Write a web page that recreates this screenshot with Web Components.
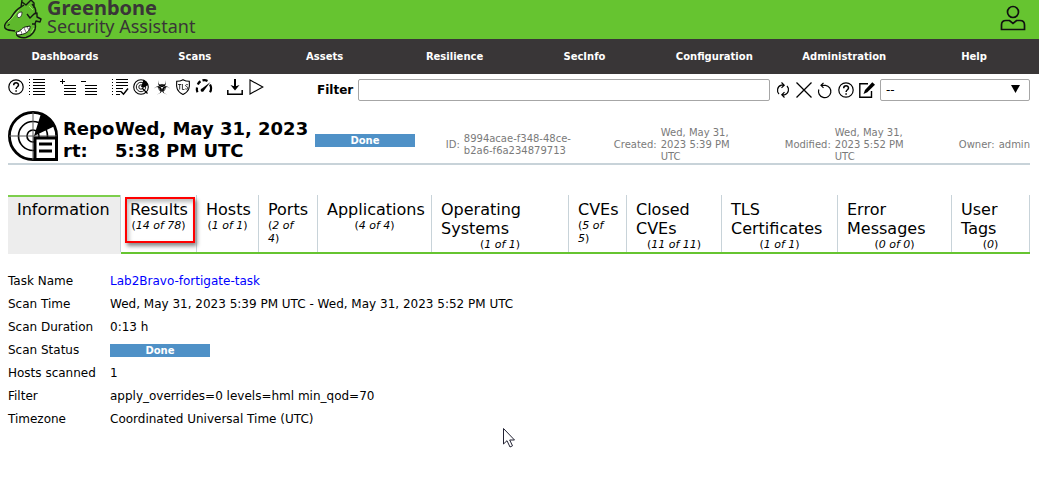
<!DOCTYPE html>
<html lang="en">
<head>
<meta charset="utf-8">
<meta name="viewport" content="width=device-width, initial-scale=1">
<title>Greenbone Security Assistant</title>
<style>
html { background: #fff; }
body { margin: 0; font-family: Verdana, "DejaVu Sans", sans-serif; font-size: 12px; color: #000; }
</style>
</head>
<body>
<gsa-app></gsa-app>
<script>
const define = (name, html, setup) => {
  const template = document.createElement('template');
  template.innerHTML = html;
  customElements.define(name, class extends HTMLElement {
    constructor() {
      super();
      this.attachShadow({ mode: 'open' }).append(template.content.cloneNode(true));
    }
    connectedCallback() { if (setup) setup(this, this.shadowRoot); }
  });
};

const list = (x, y, step, n, end = 16) =>
  Array.from({ length: n }, (_, i) => `M${x} ${y + i * step + .5}H${end}`).join('');

const crescent = 'M5 .8C2.3 6 6.600 8.200 8 8.200S13.700 6 11 .8C12.500 4 11 6.200 8 6.200S3.500 4 5 .8z';

const icons = {
  help: '<circle cx="8" cy="8" r="7.2" stroke-width="1.2"/><path d="M5.700 6.300c0-3.300 4.800-3.200 4.800-.3 0 1.700-2.400 1.800-2.400 4M8.100 11.300v1.500" stroke-width="1.500"/>',
  list: `<path d="${list(4, 0, 3, 6)}${list(0, 0, 3, 6, 1)}" shape-rendering="crispEdges"/>`,
  add: `<path d="${list(4, 6, 3, 4)}M0 2.5H5M2.5 0V5" shape-rendering="crispEdges"/>`,
  remove: `<path d="${list(4, 6, 3, 4)}M0 2.5H5" shape-rendering="crispEdges"/>`,
  results: `<path d="M4 .5H16M4 3.5H16M4 6.5H16M4 9.5H11M4 12.5H9M4 15.5H8M0 .5H1M0 3.5H1M0 6.5H1M0 9.5H1M0 12.5H1M0 15.5H1" shape-rendering="crispEdges"/><path d="M9 12.5l2.500 2.700L16 9.500" stroke-width="1.500"/>`,
  vulnerability: '<circle cx="8" cy="8" r="7.300"/><circle cx="8" cy="8" r="4.700" stroke-width=".9"/><circle cx="8" cy="8" r="2.200" stroke-width=".9"/><path d="M8 8L10.500.8A8 8 0 0 1 15 6L11 8.500z" fill="#000" stroke="none"/><path d="M9 9L14.500 14.500" stroke-width="1.300"/>',
  biohazard: `<g fill="#000" stroke="none"><path d="${crescent}"/><path d="${crescent}" transform="rotate(120 8 8.700)"/><path d="${crescent}" transform="rotate(240 8 8.700)"/></g><circle cx="8" cy="8.700" r="3.400" stroke-width=".8"/><circle cx="8" cy="8.700" r=".8" fill="#fff" stroke="none"/>`,
  tls: '<path d="M8 .7c2 1.200 4 1.600 6.300 1.600C14.800 8 14.500 12.500 8 15.400 1.500 12.500 1.200 8 1.700 2.300 4 2.300 6 1.900 8 .7z"/><path d="M3 5.500H6.300M4.700 5.500V10.500M7.400 5V10.500H9.500M13 6c-1-1-2.800-.4-2.300.8s2.200.7 2.200 2.200-2.300 1.400-2.700.5" stroke-width=".8"/>',
  performance: '<path d="M1.500 13.200A7 7 0 0 1 1 8.500M1.800 5.500A7 7 0 0 1 4.500 2.300M6.500 1.400A7 7 0 0 1 11.500 1.900M14 5.500A7.500 7.500 0 0 1 14 13.200" stroke-width="2.200"/><path d="M14.500 3L8 11.500A1.700 1.700 0 1 1 6 9.500z" fill="#000" stroke="none"/>',
  download: '<path d="M.8 11V15.200H15.200V11" stroke-width="1.500"/><path d="M8 0V8" stroke-width="2"/><path d="M3.500 6L8 11.500 12.500 6 8 7.500z" fill="#000" stroke="none"/>',
  start: '<path d="M2 1V15L14.800 8z"/>',
  refresh: '<path d="M4 12C1.500 9.500 2 4.200 6.500 3.200H9M12 4C14.500 6.500 14 11.800 9.500 12.800H7M6.500 .5L9.200 3.200 6.500 5.900M9.500 10.100L6.800 12.800 9.500 15.500" stroke-width="1.200"/>',
  clear: '<path d="M.5 .5L15.500 15.500M15.500 .5L.5 15.500" stroke-width="1.300"/>',
  reset: '<path d="M4.200 3.300H8.500A6.200 6.200 0 1 1 1.800 7.500M6.500 .8L4 3.300 6.500 5.800" stroke-width="1.200"/>',
  edit: '<path d="M9 1.800H.8V15.200H12.500V9" stroke-width="1.400"/><path d="M13.300 .3L16 2.700 8.300 10.300 4.500 12 6 8z" fill="#000" stroke="none"/>'
};

define('gsa-icon', `
<style>
:host { display: block; flex: none; width: 16px; height: 16px; }
button { display: block; width: 100%; height: 100%; padding: 0; border: 0; background: none; cursor: pointer; }
svg { display: block; width: 16px; height: 16px; overflow: visible; fill: none; stroke: #000; stroke-width: 1.1; }
</style><button type="button"><svg viewBox="0 0 16 16" aria-hidden="true"></svg></button>`, (host, root) => {
  root.querySelector('svg').innerHTML = icons[host.getAttribute('name')];
  root.querySelector('button').setAttribute('aria-label', host.getAttribute('name'));
});

define('gsa-status', `
<style>
:host { display: block; flex: none; width: 100px; height: 13px; line-height: 13px; background: #4f91c7; color: #fff; font-size: 10px; font-weight: bold; text-align: center; }
</style><slot></slot>`);

define('gsa-header', `
<style>
:host { display: flex; justify-content: space-between; align-items: center; height: 39px; padding: 0 13px 0 4px; background: #66c430; color: #393637; }
.brand { display: flex; align-self: flex-start; gap: 5px; text-decoration: none; color: inherit; }
.horse { display: block; width: 38px; height: 39px; }
.words { display: flex; flex-direction: column; font-family: "Noto Sans", sans-serif; font-size: 18px; line-height: 20px; }
strong { font-size: 20px; line-height: 16px; }
button { display: block; padding: 0; border: 0; background: none; margin-bottom: 4px; }
button svg { display: block; width: 26px; height: 26px; fill: none; stroke: #111; stroke-width: 1.7; }
</style>
<a class="brand" href="#">
<svg class="horse" viewBox="0 0 38 39" aria-hidden="true">
<path d="M17 8L18 0H28C32 4 32 9 33 14L37 18 34 22 31 30C30 35 25 38 19 38L12 33C8 30 1 31 .5 26 0 22 6 19 9 14z" fill="#5eb82c"/>
<g fill="none" stroke="#141a12" stroke-width="1.400" stroke-linejoin="round">
<path d="M18 0L17 7C11 10 9 15 6 19 2 22-.5 25 1 28 3 31 8 30 11 31M18 2L22 5 27 0 30 3V8M28 4C33 9 32 12 31 14M17 7L20 5M23 14L26 18 30 14 33 13 33 17 37 19 36 22 32 21 31 24 28 24M31 24C33 30 28 36 22 37.500 17 38.500 11 36 13 33"/>
<path d="M4 26C4 24 5 24 6 25" stroke-width="1"/>
</g>
<path d="M18 12C14 12 12 15 14 17.500 17 18 18 15 18 12z" fill="#fff" stroke="#222" stroke-width=".8"/>
<path d="M12 32C17 32 17 28 21 27L26 26C27 31 21 35 13 35z" fill="#fff" stroke="#141a12"/>
<path d="M17 31L18 34M20 28L22 32M23 27L25 30" stroke="#555" stroke-width=".8"/>
<path d="M15 10C11 14 9 18 4 22M25 6L29 10M27 33L30 28" fill="none" stroke="#91e65a"/>
</svg>
<span class="words"><strong>Greenbone</strong><span>Security Assistant</span></span>
</a>
<button type="button" aria-label="User"><svg viewBox="0 0 26 26"><circle cx="13" cy="7" r="5.500"/><path d="M1.500 24.500V20C1.500 17 3.500 15.500 6 15.500H9.500L13 18.500 16.500 15.500H20C22.500 15.500 24.500 17 24.500 20V24.500z"/></svg></button>`);

define('gsa-menu', `
<style>
:host { display: flex; height: 35px; align-items: center; background: #393637; }
a { flex: 1; text-align: center; color: #fff; font-size: 10px; font-weight: bold; line-height: 14px; text-decoration: none; }
</style>
<a href="#">Dashboards</a><a href="#">Scans</a><a href="#">Assets</a><a href="#">Resilience</a><a href="#">SecInfo</a><a href="#">Configuration</a><a href="#">Administration</a><a href="#">Help</a>`);

define('gsa-toolbar', `
<style>
:host { display: flex; justify-content: space-between; align-items: flex-start; gap: 53px; }
.icons, .group, .filter { display: flex; }
.icons { gap: 15px; }
.group, .filter { gap: 5px; }
.filter { flex: 1; align-items: center; }
label { font-weight: bold; }
input, select { box-sizing: border-box; height: 22px; border: 1px solid #a6a6a6; border-radius: 2px; background: #fff; color: #000; font: inherit; }
input { flex: 1; min-width: 0; padding: 1px 8px; }
.select { position: relative; width: 150px; }
select { display: block; width: 100%; appearance: none; padding: 0 5px; }
.select svg { position: absolute; right: 10px; top: 6px; width: 9px; height: 8px; pointer-events: none; }
</style>
<div class="icons">
<div class="group"><gsa-icon name="help"></gsa-icon><gsa-icon name="list"></gsa-icon></div>
<div class="group"><gsa-icon name="add"></gsa-icon><gsa-icon name="remove"></gsa-icon></div>
<div class="group"><gsa-icon name="results"></gsa-icon><gsa-icon name="vulnerability"></gsa-icon><gsa-icon name="biohazard"></gsa-icon><gsa-icon name="tls"></gsa-icon><gsa-icon name="performance"></gsa-icon></div>
<div class="group"><gsa-icon name="download"></gsa-icon><gsa-icon name="start"></gsa-icon></div>
</div>
<div class="filter">
<label for="filter">Filter</label><input id="filter" type="text">
<gsa-icon name="refresh"></gsa-icon><gsa-icon name="clear"></gsa-icon><gsa-icon name="reset"></gsa-icon><gsa-icon name="help"></gsa-icon><gsa-icon name="edit"></gsa-icon>
<div class="select"><select aria-label="Saved filter"><option>--</option></select><svg viewBox="0 0 9 8"><path d="M0 0H9L4.500 8z"/></svg></div>
</div>`);

define('gsa-meta', `
<style>
:host { display: flex; align-items: center; gap: 4px; font-size: 10px; line-height: 12px; color: #7a7a7a; }
.value { max-width: var(--value-width, none); }
</style><slot name="label"></slot><span class="value"><slot></slot></span>`);

define('gsa-report-header', `
<style>
:host { display: flex; align-items: center; min-height: 52px; border-bottom: 2px solid #c8d3d9; }
.radar { display: block; flex: none; width: 50px; height: 50px; align-self: flex-start; margin-right: 5px; }
h1 { display: flex; align-self: flex-start; margin: 7px 0 0; font-size: 18px; line-height: 22px; }
.kind { width: 52px; word-break: break-all; }
.date { width: 200px; }
gsa-status { margin-top: 7px; }
.metas { flex: 1; display: flex; align-items: center; justify-content: flex-end; gap: 40px; margin-top: 15px; }
.id { --value-width: 110px; }
.when { --value-width: 84px; }
</style>
<svg class="radar" viewBox="0 0 50 50" aria-hidden="true"><g fill="none" stroke="#000"><circle cx="25" cy="25" r="23.600" stroke-width="2.800"/><circle cx="25" cy="25" r="14.500" stroke-width="1.700"/><circle cx="25" cy="25" r="6" stroke-width="1.700"/><path d="M1 25H49M25 1V49" stroke="#555" stroke-width="1"/></g><path d="M26 25L33 2.500C39 4 44 8 47 15z"/><path d="M27 27H48.500V48.500H27z" fill="#fff" stroke="#000" stroke-width="3"/><path d="M31 33H44M31 40H44" stroke="#000" stroke-width="2.800"/></svg>
<h1><span class="kind">Report:</span><span class="date">Wed, May 31, 2023 5:38 PM UTC</span></h1>
<gsa-status>Done</gsa-status>
<div class="metas">
<gsa-meta class="id"><span slot="label">ID:</span>8994acae-f348-48ce-b2a6-f6a234879713</gsa-meta>
<gsa-meta class="when"><span slot="label">Created:</span>Wed, May 31, 2023 5:39 PM UTC</gsa-meta>
<gsa-meta class="when"><span slot="label">Modified:</span>Wed, May 31, 2023 5:52 PM UTC</gsa-meta>
<gsa-meta><span slot="label">Owner:</span>admin</gsa-meta>
</div>`);

define('gsa-tab', `
<style>
:host { position: relative; display: flex; min-width: 0; box-sizing: border-box; border-bottom: 2px solid #66c430; }
:host([active]) { background: #ededed; border-bottom-color: #ededed; box-shadow: inset 0 2px #7dce4c; }
button { display: flex; flex-direction: column; align-items: flex-start; width: 100%; min-height: 57px; padding: 5px 0 0 9px; border: 0; border-right: 1px solid #c8d3d9; background: none; font: inherit; color: inherit; text-align: left; }
.title { font-size: 16px; line-height: 19px; }
.count { align-self: center; margin-right: 9px; font-size: 11px; line-height: 13px; }
:host([wrap]) .count { align-self: flex-start; width: 34px; margin: 0; }
.mark { display: none; position: absolute; top: 2px; left: 4px; right: 2px; height: 42px; border: 2px solid #f00; box-shadow: 2px 3px 4px #888, inset 2px 3px 4px #bbb; pointer-events: none; }
:host([marked]) .mark { display: block; }
</style>
<button type="button" role="tab"><span class="title"><slot></slot></span></button><span class="mark"></span>`, (host, root) => {
  const count = host.getAttribute('count');
  const button = root.querySelector('button');
  if (count) {
    const words = count.split(' ').map(word => `<i>${word}</i>`).join(' ');
    button.insertAdjacentHTML('beforeend', `<span class="count">(${words})</span>`);
  }
  host.style.flex = host.getAttribute('share') + ' 1 0';
  button.setAttribute('aria-selected', host.hasAttribute('active'));
});

define('gsa-tabs', `
<style>
:host { display: flex; margin-top: 30px; }
</style><slot></slot>`, host => host.setAttribute('role', 'tablist'));

define('gsa-details', `
<style>
:host { display: block; margin-top: 16px; }
table { border-collapse: collapse; }
th, td { height: 23px; padding: 0; font-size: 12px; font-weight: normal; line-height: 17px; text-align: left; vertical-align: middle; }
th { min-width: 88px; padding-right: 14px; }
a { color: #00f; text-decoration: none; }
</style>
<table>
<tr><th scope="row">Task Name</th><td><a href="#">Lab2Bravo-fortigate-task</a></td></tr>
<tr><th scope="row">Scan Time</th><td>Wed, May 31, 2023 5:39 PM UTC - Wed, May 31, 2023 5:52 PM UTC</td></tr>
<tr><th scope="row">Scan Duration</th><td>0:13 h</td></tr>
<tr><th scope="row">Scan Status</th><td><gsa-status>Done</gsa-status></td></tr>
<tr><th scope="row">Hosts scanned</th><td>1</td></tr>
<tr><th scope="row">Filter</th><td>apply_overrides=0 levels=hml min_qod=70</td></tr>
<tr><th scope="row">Timezone</th><td>Coordinated Universal Time (UTC)</td></tr>
</table>`);

define('gsa-app', `
<style>
:host { display: block; position: relative; }
main { padding: 5px 9px 20px 8px; }
gsa-report-header { margin-top: 10px; }
.cursor { position: absolute; left: 503px; top: 428px; width: 12px; height: 20px; }
</style>
<gsa-header></gsa-header>
<gsa-menu></gsa-menu>
<main>
<gsa-toolbar></gsa-toolbar>
<gsa-report-header></gsa-report-header>
<gsa-tabs>
<gsa-tab share="113" active>Information</gsa-tab>
<gsa-tab share="76" count="14 of 78" marked>Results</gsa-tab>
<gsa-tab share="62" count="1 of 1">Hosts</gsa-tab>
<gsa-tab share="59" count="2 of 4" wrap>Ports</gsa-tab>
<gsa-tab share="114" count="4 of 4">Applications</gsa-tab>
<gsa-tab share="137" count="1 of 1">Operating Systems</gsa-tab>
<gsa-tab share="58" count="5 of 5" wrap>CVEs</gsa-tab>
<gsa-tab share="95" count="11 of 11">Closed CVEs</gsa-tab>
<gsa-tab share="116" count="1 of 1">TLS Certificates</gsa-tab>
<gsa-tab share="114" count="0 of 0">Error Messages</gsa-tab>
<gsa-tab share="78" count="0">User Tags</gsa-tab>
</gsa-tabs>
<gsa-details></gsa-details>
</main>
<svg class="cursor" viewBox="0 0 12 20" aria-hidden="true"><path d="M.5 .5V16L4 12.700 7 19 9.500 17.800 6.700 12H11.500z" fill="#fff" stroke="#223" stroke-width="1"/></svg>`);
</script>
</body>
</html>
